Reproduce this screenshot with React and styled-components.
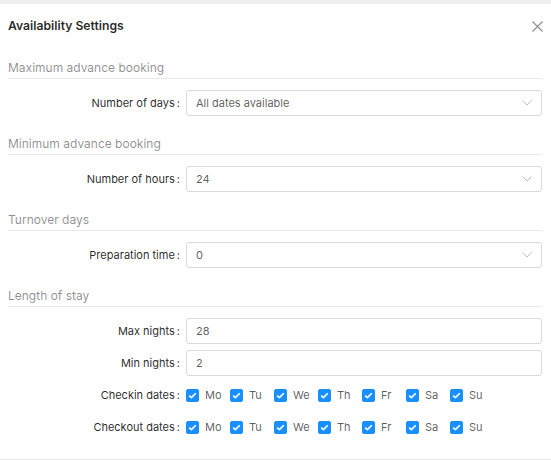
import React from 'react';
import styled, { createGlobalStyle } from 'styled-components';

// page reset
const GlobalStyle = createGlobalStyle`
  body {
    margin: 0;
    background: #f0f0f0;
    font-family: Inter, "Liberation Sans", Arial, sans-serif;
    -webkit-font-smoothing: antialiased;
  }
`;

const Modal = styled.div`
  margin-top: 4px;
  background: #fff;
  height: 456px;
  box-sizing: border-box;
  display: flex;
  flex-direction: column;
`;

const Header = styled.div`
  display: flex;
  justify-content: space-between;
  align-items: center;
  padding: 11px 8px 0 8px;
`;

const Title = styled.div`
  font-size: 12.2px;
  font-weight: 600;
  line-height: 22px;
  color: rgba(0, 0, 0, 0.85);
`;

const Close = styled.button`
  border: 0;
  background: none;
  padding: 0;
  width: 12px;
  height: 12px;
  display: flex;
  align-items: center;
  justify-content: center;
  color: #8c8c8c;
  cursor: pointer;
`;

const Body = styled.div`
  flex: 1;
  padding: 21px 9px 0 8px;
  border-bottom: 1px solid #e8e8e8;
`;

const Section = styled.section`
  margin-bottom: 18px;
`;

const SectionTitle = styled.div`
  font-size: 12px;
  line-height: 20px;
  color: rgba(0, 0, 0, 0.45);
  border-bottom: 1px solid #e8e8e8;
  margin-bottom: 11px;
`;

const Row = styled.div`
  display: grid;
  grid-template-columns: 178px 1fr;
  align-items: center;
  height: 26px;

  & + & {
    margin-top: 6px;
  }
`;

const Label = styled.label`
  text-align: right;
  padding-right: 6px;
  font-size: 11px;
  color: rgba(0, 0, 0, 0.85);
  white-space: nowrap;

  &::after {
    content: ':';
    margin-left: 2px;
  }
`;

const Field = styled.div`
  height: 26px;
  box-sizing: border-box;
  border: 1px solid #d9d9d9;
  border-radius: 3px;
  padding: 0 9px;
  display: flex;
  align-items: center;
  justify-content: space-between;
  font-size: 11px;
  color: rgba(0, 0, 0, 0.65);
`;

const Days = styled.div`
  display: grid;
  grid-auto-flow: column;
  grid-auto-columns: 44px;
  justify-content: start;
`;

const Check = styled.span`
  display: flex;
  align-items: center;
  gap: 6px;
  font-size: 11px;
  color: rgba(0, 0, 0, 0.65);
`;

const Box = styled.span`
  width: 13px;
  height: 13px;
  border-radius: 2px;
  background: ${({ checked }) => (checked ? '#1890ff' : '#fff')};
  border: 1px solid ${({ checked }) => (checked ? '#1890ff' : '#d9d9d9')};
  box-sizing: border-box;
  display: flex;
  align-items: center;
  justify-content: center;
`;

const Chevron = () => (
  <svg width="10" height="6" viewBox="0 0 10 6" fill="none">
    <path d="M0.5 0.5 L5 5 L9.5 0.5" stroke="#bfbfbf" strokeWidth="1" />
  </svg>
);

const Tick = () => (
  <svg width="9" height="7" viewBox="0 0 9 7" fill="none">
    <path d="M1.2 3.6 L3.4 5.6 L7.8 1.2" stroke="#fff" strokeWidth="1.6" />
  </svg>
);

const dayNames = ['Mo', 'Tu', 'We', 'Th', 'Fr', 'Sa', 'Su'];

const DayPicker = () => (
  <Days>
    {dayNames.map((d) => (
      <Check key={d}>
        <Box checked>
          <Tick />
        </Box>
        {d}
      </Check>
    ))}
  </Days>
);

const SelectRow = ({ label, value }) => (
  <Row>
    <Label>{label}</Label>
    <Field>
      <span>{value}</span>
      <Chevron />
    </Field>
  </Row>
);

const App = () => (
  <>
    <GlobalStyle />
    <Modal>
      <Header>
        <Title>Availability Settings</Title>
        <Close aria-label="Close">
          <svg width="11" height="11" viewBox="0 0 11 11">
            <path d="M0.5 0.5 L10.5 10.5 M10.5 0.5 L0.5 10.5" stroke="currentColor" strokeWidth="1.1" />
          </svg>
        </Close>
      </Header>
      <Body>
        <Section>
          <SectionTitle>Maximum advance booking</SectionTitle>
          <SelectRow label="Number of days" value="All dates available" />
        </Section>
        <Section>
          <SectionTitle>Minimum advance booking</SectionTitle>
          <SelectRow label="Number of hours" value="24" />
        </Section>
        <Section>
          <SectionTitle>Turnover days</SectionTitle>
          <SelectRow label="Preparation time" value="0" />
        </Section>
        <Section>
          <SectionTitle>Length of stay</SectionTitle>
          <Row>
            <Label>Max nights</Label>
            <Field>28</Field>
          </Row>
          <Row>
            <Label>Min nights</Label>
            <Field>2</Field>
          </Row>
          <Row>
            <Label>Checkin dates</Label>
            <DayPicker />
          </Row>
          <Row>
            <Label>Checkout dates</Label>
            <DayPicker />
          </Row>
        </Section>
      </Body>
    </Modal>
  </>
);

export default App;
